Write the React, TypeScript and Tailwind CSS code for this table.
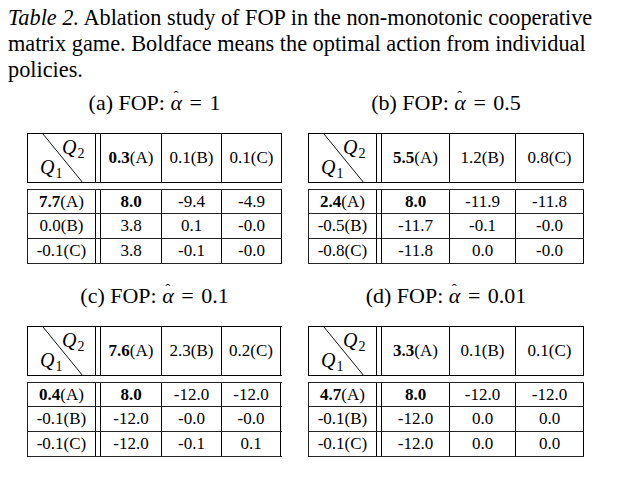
import React from "react";

type T = {
  caption: React.ReactNode;
  widths: number[];
  head: React.ReactNode[];
  rows: React.ReactNode[][];
};

const B = ({ children }: { children: React.ReactNode }) => <span className="font-bold">{children}</span>;

const Q = ({ n }: { n: string }) => (
  <span className="italic text-[20px]">
    Q<span className="not-italic text-[14px] relative top-[4px] ml-[1px]">{n}</span>
  </span>
);

const Alpha = () => (
  <span className="relative inline-block italic">
    α
    <span className="absolute left-[3px] top-[-1px] not-italic text-[15px] leading-[15px]">ˆ</span>
  </span>
);

function Table({ t }: { t: T }) {
  const [w0, w1, w2, w3] = t.widths;
  return (
    <div className="flex flex-col">
      <div className="flex border-l border-t border-b border-black h-[50px]">
        <div className="relative border-r border-black" style={{ width: w0 }}>
          <svg className="absolute left-0 top-0" width={w0} height={49}>
            <line x1={15} y1={0} x2={55} y2={49} stroke="#111" strokeWidth={1} />
          </svg>
          <div className="absolute left-[34px] top-[2px] leading-[22px]">
            <Q n="2" />
          </div>
          <div className="absolute left-[12px] top-[22px] leading-[22px]">
            <Q n="1" />
          </div>
        </div>
        <div className="w-[4px]" />
        <div className="border-l border-r border-black flex items-center justify-center" style={{ width: w1 }}>
          {t.head[0]}
        </div>
        <div className="border-r border-black flex items-center justify-center" style={{ width: w2 }}>
          {t.head[1]}
        </div>
        <div className="border-r border-black flex items-center justify-center" style={{ width: w3 }}>
          {t.head[2]}
        </div>
      </div>
      <div className="h-[6px]" />
      <div className="flex flex-col border-l border-t border-[#222]">
        {t.rows.map((r, i) => (
          <div key={i} className={"flex border-b border-[#222] " + (i === 0 ? "h-[24px]" : "h-[25px]")}>
            <div className="border-r border-black flex items-center justify-center" style={{ width: w0 }}>
              {r[0]}
            </div>
            <div className="w-[4px]" />
            <div className="border-l border-r border-black flex items-center justify-center" style={{ width: w1 }}>
              {r[1]}
            </div>
            <div className="border-r border-black flex items-center justify-center" style={{ width: w2 }}>
              {r[2]}
            </div>
            <div className="border-r border-black flex items-center justify-center" style={{ width: w3 }}>
              {r[3]}
            </div>
          </div>
        ))}
      </div>
    </div>
  );
}

const Cap = ({ l, v }: { l: string; v: string }) => (
  <div className="text-center text-[22px] leading-[26px]">
    ({l}) FOP: <Alpha /> <span className="mx-[2px]">=</span> {v}
  </div>
);

const tables: T[] = [
  {
    caption: <Cap l="a" v="1" />,
    widths: [68, 62, 60, 60],
    head: [<><B>0.3</B>(A)</>, "0.1(B)", "0.1(C)"],
    rows: [
      [<><B>7.7</B>(A)</>, <B>8.0</B>, "-9.4", "-4.9"],
      ["0.0(B)", "3.8", "0.1", "-0.0"],
      ["-0.1(C)", "3.8", "-0.1", "-0.0"],
    ],
  },
  {
    caption: <Cap l="b" v="0.5" />,
    widths: [68, 69, 66, 68],
    head: [<><B>5.5</B>(A)</>, "1.2(B)", "0.8(C)"],
    rows: [
      [<><B>2.4</B>(A)</>, <B>8.0</B>, "-11.9", "-11.8"],
      ["-0.5(B)", "-11.7", "-0.1", "-0.0"],
      ["-0.8(C)", "-11.8", "0.0", "-0.0"],
    ],
  },
  {
    caption: <Cap l="c" v="0.1" />,
    widths: [68, 62, 60, 59],
    head: [<><B>7.6</B>(A)</>, "2.3(B)", "0.2(C)"],
    rows: [
      [<><B>0.4</B>(A)</>, <B>8.0</B>, "-12.0", "-12.0"],
      ["-0.1(B)", "-12.0", "-0.0", "-0.0"],
      ["-0.1(C)", "-12.0", "-0.1", "0.1"],
    ],
  },
  {
    caption: <Cap l="d" v="0.01" />,
    widths: [68, 69, 66, 68],
    head: [<><B>3.3</B>(A)</>, "0.1(B)", "0.1(C)"],
    rows: [
      [<><B>4.7</B>(A)</>, <B>8.0</B>, "-12.0", "-12.0"],
      ["-0.1(B)", "-12.0", "0.0", "0.0"],
      ["-0.1(C)", "-12.0", "0.0", "0.0"],
    ],
  },
];

export default function App() {
  return (
    <div
      className="w-[625px] h-[480px] bg-white text-black pt-[5px]"
      style={{ fontFamily: '"Liberation Serif", "Times New Roman", serif' }}
    >
      <p className="px-[8px] text-[22.3px] leading-[26px] w-[625px] whitespace-nowrap">
        <span className="italic">Table 2.</span> Ablation study of FOP in the non-monotonic cooperative
        <br />
        matrix game. Boldface means the optimal action from individual
        <br />
        policies.
      </p>
      <div className="grid grid-cols-[255px_276px] gap-x-[26px] ml-[27px] text-[17px]">
        {tables.map((t, i) => (
          <div key={i} className={"flex flex-col items-stretch " + (i >= 2 ? "mt-[19px]" : "mt-[7px]")}>
            {t.caption}
            <div className="h-[17px]" />
            <Table t={t} />
          </div>
        ))}
      </div>
    </div>
  );
}
